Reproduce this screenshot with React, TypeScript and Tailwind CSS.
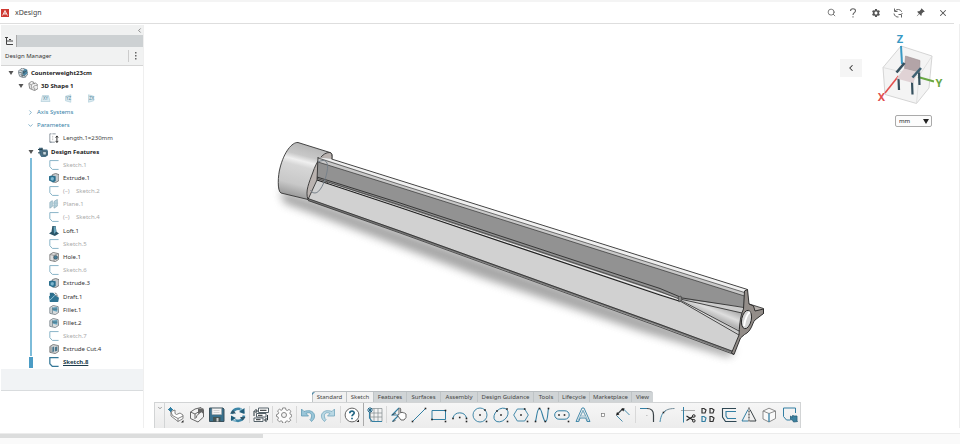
import { useState, type ReactNode } from "react";
import { BsPinAngleFill } from "react-icons/bs";
import { MdSettings } from "react-icons/md";
import { ChevronDown, ChevronLeft, ChevronRight, Search, X } from "lucide-react";

type TreeRow = {
  label: string;
  icon: string;
  muted?: boolean;
  derived?: boolean;
  active?: boolean;
};

const features: TreeRow[] = [
  { label: "Sketch.1", icon: "sketch", muted: true },
  { label: "Extrude.1", icon: "extrude" },
  { label: "Sketch.2", icon: "sketch", muted: true, derived: true },
  { label: "Plane.1", icon: "plane", muted: true },
  { label: "Sketch.4", icon: "sketch", muted: true, derived: true },
  { label: "Loft.1", icon: "loft" },
  { label: "Sketch.5", icon: "sketch", muted: true },
  { label: "Hole.1", icon: "hole" },
  { label: "Sketch.6", icon: "sketch", muted: true },
  { label: "Extrude.3", icon: "extrude" },
  { label: "Draft.1", icon: "draft" },
  { label: "Fillet.1", icon: "fillet" },
  { label: "Fillet.2", icon: "fillet" },
  { label: "Sketch.7", icon: "sketch", muted: true },
  { label: "Extrude Cut.4", icon: "cut" },
  { label: "Sketch.8", icon: "sketchActive", active: true },
];

const tabs = [
  { name: "Standard", width: "w-[34px]" },
  { name: "Sketch", width: "w-[27px]" },
  { name: "Features", width: "w-[33px]" },
  { name: "Surfaces", width: "w-[34px]" },
  { name: "Assembly", width: "w-[37px]" },
  { name: "Design Guidance", width: "w-[56px]" },
  { name: "Tools", width: "w-[25px]" },
  { name: "Lifecycle", width: "w-[31px]" },
  { name: "Marketplace", width: "w-[42px]" },
  { name: "View", width: "w-[22px]" },
];

// 12 x 12 drawings for the design tree
const treeIcons: Record<string, ReactNode> = {
  product: (
    <>
      <path d="M0 4l5-4 5 2 2 5-4 5-6-2z" fill="#d7dde1" stroke="#56646c" strokeWidth=".8" />
      <path d="M5 5l3-4 3 1v5L7 10z" fill="#4b87a5" />
      <path d="M1 5l4 1v5M6 6l5-3M3 3l4 1v3M3 8l6 2" fill="none" stroke="#3d4b53" strokeWidth=".8" />
    </>
  ),
  shape: (
    <>
      <path d="M1 3l3-2.500 3 1v2l2-1L12 5v4l-4 2.500L2 9z" fill="#f1f1f1" stroke="#6c6c6c" strokeWidth=".9" />
      <path d="M1 3l3 1.500v5M4 4.500l3-2M6 9c0-3 2-4 5-3.500M8 8v3" fill="none" stroke="#777" strokeWidth=".8" />
    </>
  ),
  parameter: (
    <>
      <path d="M3 1H1v10h2M4 1h4M1 11h6" fill="none" stroke="#6e7c86" strokeWidth=".9" />
      <path d="M4 4h1M4 6h1M4 8h1" stroke="#999" />
      <path d="M9.500 4v7M8 5.500L9.500 3.500 11 5.500M8 9.500l1.500 2 1.500-2" fill="none" stroke="#333" strokeWidth="1.200" />
    </>
  ),
  featureSet: (
    <>
      <path d="M1 1h4v2h6l1 2v5l-3 2H4L2 9z" fill="#4a7187" />
      <path d="M0 3h5M0 7h3M5 1v3" stroke="#25424f" strokeWidth="1.200" />
      <path d="M5.500 5.500h4.500v4H6z" fill="#c9d9e1" stroke="#2e4a57" strokeWidth=".8" />
    </>
  ),
  sketch: <path d="M11.500 .7H1v7.300l3 3.300h7.500" fill="none" stroke="#8ab5c8" strokeWidth="1.200" />,
  sketchActive: <path d="M11.500 .7H1v7.300l3 3.300h7.500" fill="none" stroke="#347797" strokeWidth="1.500" />,
  extrude: (
    <>
      <path d="M4 2l4-1.500 4 1.500v7l-4 2.500-4-1z" fill="#c3c8cb" stroke="#555" strokeWidth=".8" />
      <path d="M0 4l3-1 5 1v5.500l-3 2L0 9z" fill="#2a6f8e" />
      <path d="M2 5.500l3-.8 1 2-1 2.500-3-.700z" fill="#7fb7cf" />
    </>
  ),
  plane: (
    <>
      <path d="M1 4l3-2v7l-3 2zM6 3l4-2.500v8L6 11z" fill="#b8d3de" stroke="#86a8b6" strokeWidth=".8" />
      <path d="M4 5h7M4 8h5" stroke="#a1c2cf" strokeWidth=".9" />
    </>
  ),
  loft: (
    <>
      <path d="M4 0h4l1 7 3 2-5 3L0 9l3-2z" fill="#2b5567" />
      <path d="M5.500 .5H8L8.500 7 6 9.500z" fill="#68a5bd" />
    </>
  ),
  hole: (
    <>
      <path d="M1 3l4-2.500L11.500 2v7l-4 2.500L1 10z" fill="#dedede" stroke="#666" strokeWidth=".9" />
      <path d="M1 3l5 1v7M6 4l5-2" stroke="#777" strokeWidth=".8" fill="none" />
      <circle cx="8" cy="6.500" r="2.300" fill="#477d97" stroke="#33434b" strokeWidth=".6" />
    </>
  ),
  draft: (
    <>
      <path d="M1 1h4l3 3-2 2L1 7z" fill="#2c6c8a" />
      <path d="M0 5l6-2 6 4-1 5H1z" fill="#2f7493" />
      <path d="M7 1l3 2M8 4l3 1" stroke="#555" strokeWidth=".9" />
      <path d="M1 10l6-6" stroke="#a9d2e2" />
    </>
  ),
  fillet: (
    <>
      <path d="M1 3l4-2.500 6 1.500.5 7-4 2.500L1 10z" fill="#d9dcdd" stroke="#68737a" strokeWidth=".9" />
      <path d="M4 3l6-.5V8L5 7z" fill="#5f9fba" />
      <path d="M4 3v7M4 5h6" stroke="#41606f" strokeWidth=".8" />
    </>
  ),
  cut: (
    <>
      <path d="M1 3l4-2.500L11.500 2v7l-4 2.500L1 10z" fill="#cfd2d3" stroke="#666" strokeWidth=".9" />
      <path d="M4 4l2-1v6l-2 1zM7 4l3-1v5l-3 1z" fill="#4b768c" />
      <path d="M2.500 3v7" stroke="#777" strokeWidth=".8" />
    </>
  ),
};

const ink = "#3b4347";
const blue = "#337fa3";

// 16 x 16 drawings for the action bar
const newPart = (
  <>
    <path d="M3 4.500L7 3v3.500l1.500 1L12 6l3 2v3.500l-5 3L3 9z" fill="#fff" stroke="#777" strokeWidth=".9" />
    <path d="M3 5l1.500 3.500L10 11.500 15 9M10 11.500v3" stroke="#777" strokeWidth=".9" />
    <path d="M2.500 0v5M0 2.500h5M1 1l3 3M4 1L1 4" stroke={blue} />
    <path d="M15.500 13v2.500H13z" fill="#222" />
  </>
);
const openPart = (
  <>
    <path d="M1.500 5L6 2l6-1.500L14.500 3v7l-5.500 5-7.500-3.500z" fill="#f3f3f3" stroke="#666" />
    <path d="M1.500 5L6 7v5M6 7l5-3M7 11c1-4 3-4 6-7" stroke="#666" />
    <path d="M9 1.500h5.500V7L12 5 9 7z" fill="#666" />
  </>
);
const save = (
  <>
    <path d="M.5 1h13.500l1 1V14.500H.5z" fill="#39708c" stroke="#3b515c" />
    <path d="M3 1.500h9.500v6H3z" fill="#f5f5f5" stroke="#aaa" strokeWidth=".6" />
    <path d="M4 10h7.500v4.500H4z" fill="#455" />
    <path d="M7.500 11h2v3.500h-2z" fill="#ccc" />
    <path d="M4.500 3.500h6M4.500 5.500h6" stroke="#bbb" strokeWidth=".6" />
  </>
);
const update = (
  <>
    <path d="M2 7a6 6 0 0 1 9.500-4M14 8.500A6 6 0 0 1 5 13" stroke="#3d86a7" strokeWidth="2.600" />
    <path d="M1 11.500A6 6 0 0 0 6 14M10 2a6 6 0 0 1 4 4" stroke="#82b4ca" strokeWidth="2" />
    <path d="M14.500 1v6L9 5zM1 14V8.500L6 11z" fill="#1f5c79" />
    <path d="M0 6.500L3 3l3 3.500zM10 10h5.500l-3 3.500z" fill="#31566a" />
  </>
);
const reorder = (
  <>
    <path d="M5.500 1h10v4.500h-10zM3.500 6.500h9.500V10H3.500zM1 11h9v3.500H1z" fill="#fff" stroke="#56636a" />
    <path d="M7 3.300h6.500M5 8.300h4.500M3 12.700h4.500" stroke="#4a4f52" strokeWidth="1.300" />
    <path d="M1 9V4h3M2.500 2l2 2-2 2M14.500 8v5H12M13.500 11l-2 2 2 2" stroke="#26343b" />
  </>
);
const gear = (
  <>
    <path d="M6.500 1h3l.4 2 1.500.7 1.800-1.200 2 2-1.200 1.800.6 1.500 1.400.4v2l-1.600.7-.6 1.300 1.200 1.800-2 1.700-1.700-1.100-1.500.6-.5 1.800h-2.800l-.4-1.900-1.400-.6-1.700 1.100-2-2 1.100-1.800-.6-1.400-1.500-.4V8l1.700-.6.6-1.500-1.200-1.800 2-1.800 1.800 1.200L6 3z" transform="translate(.5 0) scale(.95)" fill="#fdfdfd" stroke="#858585" />
    <circle cx="8" cy="8" r="2.500" fill="#f4f4f4" stroke="#858585" />
  </>
);
const undo = (
  <path d="M1.500 2v7h7L6 6.500c3.500-2 7 0 5 5l-1 1 1.500 2c6.500-5 2-13.500-7.500-10z" fill="#9ac6d9" stroke="#5f9bb4" strokeWidth=".8" />
);
const redo = (
  <path d="M14.500 2v7h-7L10 6.500c-3.500-2-7 0-5 5l1 1-1.500 2C-2 9.500 2.500 1 12 4.500z" fill="#b9d8e4" stroke="#72a6bc" strokeWidth=".8" />
);
const help = (
  <>
    <circle cx="8" cy="8" r="6.900" fill="#fff" stroke="#555" strokeWidth=".9" />
    <path d="M5.800 6.300C5.800 3.300 10.300 3.500 10.200 6c0 1.500-2.200 1.500-2.200 3.300M8 10.700V12.300" stroke="#246785" strokeWidth="1.700" />
    <path d="M15 12.500V15h-2.500z" fill="#222" />
  </>
);
const sketchGrid = (
  <>
    <path d="M3.500 1.500h11.500v13H3.500zM7 1.500v13M11 1.500v13M3 6h12M3 10h12" stroke="#81898d" strokeWidth=".7" />
    <path d="M2.500 5v6l3 3.500H15" stroke={blue} strokeWidth="1.100" />
    <path d="M3 0v6M0 3h6M1 1l4 4M5 1L1 5" stroke="#286b8c" />
  </>
);
const smartSketch = (
  <>
    <path d="M8 1L1 8h7l-6.500 6.500" stroke={blue} strokeWidth="1.200" />
    <path d="M1 8l4-2M1.500 14.500l3-1" stroke={ink} strokeWidth=".8" />
    <path d="M8 7.500V2c0-1.200 1.700-1.200 1.700 0v4l1.300-.8 1.300.5 1.200.3 1.500 1v3.500l-2 2.500H10L6.500 8.500z" fill="#fff" stroke="#555" strokeWidth=".9" />
  </>
);
const dots = (...points: number[][]) =>
  points.map(([x, y]) => <rect key={x + "-" + y} x={x - 0.8} y={y - 0.8} width="1.6" height="1.6" fill="#222" stroke="none" />);
const line = <><path d="M1.500 14.500l13-13" stroke={blue} />{dots([1.5, 14.5], [14.5, 1.5])}</>;
const rectangle = <><path d="M1 3.500h13.500V12.500H1z" stroke={blue} />{dots([14.5, 3.5], [1, 12.5], [14.5, 14.5])}</>;
const arc = <><path d="M1 11a7 7 0 0 1 13.500 0" stroke={blue} />{dots([1, 11.5], [14.5, 11.5], [7.7, 10.5], [14.5, 14.5])}</>;
const circle = <><circle cx="8" cy="8" r="7" stroke={blue} strokeWidth=".9" />{dots([8, 8], [13, 3], [14.5, 14.5])}</>;
const ellipse = <><ellipse cx="8" cy="8" rx="8" ry="5.800" transform="rotate(-42 8 8)" stroke={blue} strokeWidth=".9" />{dots([8, 8], [14, 2], [4, 4], [14.5, 14.5])}</>;
const polygon = <><path d="M4.300 2h7.400L15.300 8l-3.600 6H4.300L.7 8z" stroke={blue} strokeWidth=".9" />{dots([8, 8], [11.7, 2], [14.5, 14.5])}</>;
const spline = <><path d="M1.500 14.500C3 9 3 1.500 5.500 1.500S9 14.500 11.500 14.500 13.500 6 14.500 1.500" stroke={blue} strokeWidth="1.100" />{dots([1.5, 14.5], [5.5, 1.5], [11.3, 14.5], [14.5, 1.5])}</>;
const slot = <><rect x=".7" y="3.800" width="14.500" height="8.400" rx="4.200" stroke={blue} />{dots([5, 8], [10.5, 8], [14.5, 14.5])}</>;
const textTool = (
  <>
    <path d="M1 14.500L7 1h2l6 13.500h-3L10.800 11H5L3.800 14.500z" stroke={blue} strokeWidth=".9" />
    <path d="M8 4L5.500 9h5zM3 14L8 3l5 11" stroke="#6a9fb7" strokeWidth=".7" />
  </>
);
const point = <rect x="6.500" y="6.500" width="3" height="3" fill="#fff" stroke="#777" strokeWidth=".7" />;
const dimension = (
  <>
    <path d="M2 7.500l6-6" stroke={ink} strokeWidth="1.100" />
    <path d="M8.500 2l6 6M1.500 8.500l6 6" stroke={blue} strokeWidth=".9" />
    <path d="M1 8.500l1-3.500 2.500 2.500zM9.500 1L6 2l2.500 2.500z" fill="#222" />
  </>
);
const corner = <><path d="M1 1.500h7" stroke={blue} /><path d="M8 1.500c4.500 0 6.500 2 6.500 6.500V15" stroke={ink} strokeWidth="1.200" /><path d="M7.500 8.500h.8" stroke="#999" /></>;
const tangentArc = <><path d="M1 15C2 8 4 5 7 3.500" stroke={blue} strokeWidth=".9" /><path d="M5 5c2-2 5-3.500 10.500-3.500" stroke="#65818f" strokeWidth=".9" />{dots([4.5, 5.5])}</>;
const trim = (
  <>
    <path d="M1 3.500h14" stroke="#999" strokeWidth=".8" />
    <path d="M3.500 0v15.500" stroke={blue} />
    <path d="M6.500 9l6.500 4M6.500 13.500L13 9.500" stroke="#222" strokeWidth="1.200" />
    <circle cx="13.800" cy="9" r="1.300" stroke="#222" /><circle cx="13.800" cy="13.800" r="1.300" stroke="#222" />
  </>
);
const pattern = (
  <>
    <path d="M10 1.500h2l2 1.500-1 3h-3zM2 1.500h2L6 3 5 6H2zM10 9.500h2l2 1.500-1 3.500h-3z" stroke="#333" strokeWidth="1.200" />
    <path d="M2 9.500h2L6 11l-1 3.500H2z" stroke={blue} strokeWidth="1.200" />
  </>
);
const offset = <><path d="M15 1.500H1.500V10l3 4.500H15.500" stroke="#2f4854" strokeWidth="1.100" /><path d="M15 4.500H5V9l1.500 2.500H15" stroke={blue} strokeWidth="1.100" /></>;
const mirror = <><path d="M7 2.500L1 14h6" stroke={blue} /><path d="M9 2.500L15 14H9" stroke={ink} /><path d="M8 .5v15" stroke="#222" strokeDasharray="2 1" /></>;
const projectBox = (
  <>
    <path d="M2 4l6-2.800L14.500 4v7.500L8 15l-6-3z" fill="#f9f9f9" stroke="#808080" strokeWidth=".9" />
    <path d="M2 4l6 2.500L14.500 4" stroke="#808080" strokeWidth=".9" />
    <path d="M8 6.500V15" stroke={blue} strokeWidth="1.300" />
  </>
);
const exitSketch = (
  <>
    <path d="M13.500 6V1H1.500v8.500l3 3.500H8.500" stroke={blue} />
    <path d="M8.500 9l2 1.500v-2l2 .5h2.500v4.500l.5 1-4 .5-1-2-2-.5z" fill="#3c819f" stroke="#245d78" strokeWidth=".8" />
  </>
);

const toolGroups: { name: string; icon: ReactNode }[][] = [
  [
    { name: "New", icon: newPart },
    { name: "Open", icon: openPart },
    { name: "Save", icon: save },
    { name: "Update", icon: update },
  ],
  [{ name: "Reorder", icon: reorder }],
  [{ name: "Options", icon: gear }],
  [
    { name: "Undo", icon: undo },
    { name: "Redo", icon: redo },
  ],
  [{ name: "Help", icon: help }],
  [{ name: "New sketch", icon: sketchGrid }],
  [
    { name: "Smart sketch", icon: smartSketch },
    { name: "Line", icon: line },
    { name: "Rectangle", icon: rectangle },
    { name: "Arc", icon: arc },
    { name: "Circle", icon: circle },
    { name: "Ellipse", icon: ellipse },
    { name: "Polygon", icon: polygon },
    { name: "Spline", icon: spline },
    { name: "Slot", icon: slot },
    { name: "Text", icon: textTool },
    { name: "Point", icon: point },
    { name: "Dimension", icon: dimension },
  ],
  [
    { name: "Corner", icon: corner },
    { name: "Tangent arc", icon: tangentArc },
    { name: "Trim", icon: trim },
    { name: "Pattern", icon: pattern },
    { name: "Offset", icon: offset },
    { name: "Mirror", icon: mirror },
    { name: "Project", icon: projectBox },
    { name: "Exit sketch", icon: exitSketch },
  ],
];

export default function App() {
  const [activeTab, setActiveTab] = useState("Sketch");
  const [unit, setUnit] = useState("mm");

  return (
    <div className="flex min-h-screen flex-col border-t-2 border-[#f4f4f4] bg-white font-['Noto_Sans',sans-serif] text-[6px] leading-none text-[#444]">
      <Header />
      <div className="flex border-r border-[#eee]">
        <DesignManager />
        <main className="min-w-0 flex-1">
          <div className="relative">
            <Model />
            <button type="button" aria-label="Collapse panel" className="absolute top-[35px] right-[97px] flex h-[18px] w-[22px] items-center justify-center bg-[#f5f5f5] text-[#333]">
              <ChevronLeft size={10} strokeWidth={2.5} />
            </button>
            <div className="absolute top-[8px] right-[15px]">
              <ViewCube />
            </div>
            <div className="absolute top-[91px] right-[27px]">
              <select aria-label="Units" value={unit} onChange={(event) => setUnit(event.target.value)} className="block h-[12px] w-[37px] appearance-none rounded-[2px] border border-[#aaa] bg-[#fcfcfc] pl-[3px] text-[6px] leading-none text-[#222]">
                <option>mm</option>
                <option>cm</option>
                <option>in</option>
              </select>
              <svg viewBox="0 0 6 5" className="pointer-events-none absolute top-[4px] right-[3px] h-[5px] w-[6px]">
                <path d="M0 0h6L3 5z" fill="#222" />
              </svg>
            </div>
          </div>

          <div className="ml-[10px] w-[647px] max-w-full">
            <div role="tablist" className="relative ml-[158px] flex h-[11px] w-[341px] overflow-hidden rounded-t-[3px] border-t border-[#b9bec1] bg-[#d0d4d6]">
              {tabs.map((tab) => (
                <button
                  key={tab.name}
                  type="button"
                  role="tab"
                  aria-selected={tab.name === activeTab}
                  onClick={() => setActiveTab(tab.name)}
                  className={`${tab.width} shrink-0 border-l border-[#bfc4c6] whitespace-nowrap ${tab.name === activeTab || tab.name === "Standard" ? "bg-[#f1f1f1]" : ""}`}
                >
                  {tab.name}
                </button>
              ))}
              <svg viewBox="0 0 3 3" className="pointer-events-none absolute top-0 left-0 size-[3px]">
                <path d="M0 0h3L0 3z" fill="#3b7ea0" />
              </svg>
            </div>
            <ActionBar />
          </div>
        </main>
      </div>
      <div className="mt-[5px] flex-1 border-t border-[#ececec] bg-[#fafafa]">
        <div className="h-[4px] w-[27.4%] bg-[#dcdddd]" />
      </div>
    </div>
  );
}

function Header() {
  return (
    <header className="mr-[6px] flex h-[22px] items-center border-b border-[#dedede] pl-px">
      <svg viewBox="0 0 8 8" className="size-2">
        <rect width="8" height="8" fill="#cf3a32" />
        <path d="M1.500 6.500L4 1.500l2.500 5M2.500 5h3M4 3v2" fill="none" stroke="#fff" strokeWidth=".8" />
      </svg>
      <h1 className="ml-[6px] flex-1 text-[7px]">xDesign</h1>
      <div className="flex w-[134px] text-[#555] *:flex *:h-[20px] *:flex-1 *:items-center *:justify-center">
        <button type="button" aria-label="Search"><Search size={9} strokeWidth={2} /></button>
        <button type="button" aria-label="Help">
          <svg viewBox="0 0 8 10" className="h-[10px] w-2" fill="none" stroke="#666" strokeWidth="1.100">
            <path d="M1.500 3C1.500 0 6.500 0 6.500 2.800 6.500 4.800 4 4.500 4 7M4 8.300v1.200" />
          </svg>
        </button>
        <button type="button" aria-label="Settings"><MdSettings size={10} /></button>
        <button type="button" aria-label="Refresh">
          <svg viewBox="0 0 10 10" className="size-[10px]" fill="none" stroke="#666">
            <path d="M1.500 .5v3h3M2 3.200A3.800 3.800 0 0 1 8.700 3.800M9 5v1M1 5.500a4 4 0 0 0 4.500 3.500" />
            <path d="M8.500 9.500v-3h-3" />
          </svg>
        </button>
        <button type="button" aria-label="Pin"><BsPinAngleFill size={9} /></button>
        <button type="button" aria-label="Close"><X size={10} strokeWidth={2.5} /></button>
      </div>
    </header>
  );
}

function DesignManager() {
  return (
    <aside className="mt-px ml-px w-[143px] shrink-0 border-r border-[#efefef]">
      <div className="flex h-[10px] items-center justify-end bg-[#f0f1f1]">
        <button type="button" aria-label="Hide panel"><ChevronLeft size={7} /></button>
      </div>
      <div className="flex h-[12px] bg-[#cdd1d3]">
        <button type="button" aria-label="Tree" className="flex w-[16px] items-center justify-center border-r border-[#aaa] bg-[#f2f3f3]">
          <svg viewBox="0 0 8 8" className="size-2" fill="none" stroke="#444">
            <path d="M0 .5h3M1.500 1v6.500H8M2 4h6M4 2.500h2" />
          </svg>
        </button>
      </div>
      <div className="flex h-[19px] items-center border-b border-[#d5d5d5] bg-[#f1f2f2] pl-1">
        <h2 className="flex-1 text-[#333]">Design Manager</h2>
        <button type="button" aria-label="More" className="flex h-[12px] w-[15px] items-center justify-center border-l border-[#ccc]">
          <svg viewBox="0 0 2 8" className="h-2 w-[2px]" fill="#666">
            <path d="M0 0h1.500v1.500H0zM0 3h1.500v1.500H0zM0 6h1.500v1.500H0z" />
          </svg>
        </button>
      </div>

      <ul className="grid h-[303px] auto-rows-fr whitespace-nowrap *:flex *:items-center *:gap-[3px]">
        <li className="pl-[6px] font-bold text-[#222]"><Caret /><TreeIcon name="product" />Counterweight23cm</li>
        <li className="pl-[16px] font-bold text-[#222]"><Caret /><TreeIcon name="shape" />3D Shape 1</li>
        <li className="pl-[40px]">
          <div className="flex gap-[14px]">
            <PlaneIcon name="XY" shape="M2 1h8l2 8H0z" />
            <PlaneIcon name="YZ" shape="M2 2l7-2v10l-7-2z" />
            <PlaneIcon name="ZX" shape="M2 0l7 2v6l-7 2z" />
          </div>
        </li>
        <li className="pl-[26px] text-[#3582a8]"><ChevronRight size={7} />Axis Systems</li>
        <li className="pl-[26px] text-[#3582a8]"><ChevronDown size={7} />Parameters</li>
        <li className="pl-[48px]"><TreeIcon name="parameter" /><span className="pl-px">Length.1=230mm</span></li>
        <li className="pl-[26px] font-bold text-[#222]"><Caret /><TreeIcon name="featureSet" />Design Features</li>
        {features.map((row) => (
          <li key={row.label} className={row.active ? "pl-[28px] font-bold text-[#1d3c4c]" : row.muted ? "pl-[29px] text-[#aaa]" : "pl-[29px] text-[#333]"}>
            <span className={row.active ? "mr-[13px] h-[11px] w-[4px] bg-[#4b9cc5]" : "mr-[14px] w-[2px] self-stretch bg-[#7dbcd9]"} />
            <TreeIcon name={row.icon} />
            {row.derived && <span className="w-[10px] pl-px">(–)</span>}
            <span className={row.active ? "pl-px underline" : "pl-px"}>{row.label}</span>
          </li>
        ))}
      </ul>
      <div className="h-[22px] border-b border-[#d9dcde] bg-[#f1f3f5]" />
    </aside>
  );
}

function Caret() {
  return (
    <svg viewBox="0 0 8 8" className="size-2">
      <path d="M1.500 2h5L4 6z" fill="#555" />
    </svg>
  );
}

function PlaneIcon({ name, shape }: { name: string; shape: string }) {
  return (
    <svg viewBox="0 0 12 10" className="h-[9px] w-[9px] overflow-visible">
      <path d={shape} fill="#dcebf1" stroke="#a9c9d6" strokeWidth=".8" />
      <text x="6" y="7" fontSize="6" textAnchor="middle" fill="#5a8ca3">{name}</text>
    </svg>
  );
}

function TreeIcon({ name }: { name: string }) {
  return <svg viewBox="0 0 12 12" className="size-[10px] shrink-0">{treeIcons[name]}</svg>;
}

function ActionBar() {
  return (
    <div role="toolbar" className="flex h-[26px] border border-b-0 border-[#d2d4d5] bg-linear-to-b from-[#f6f6f6] to-[#ececec]">
      <button type="button" aria-label="Collapse toolbar" className="flex w-[10px] justify-center border-r border-[#d2d4d5] pt-[2px]">
        <ChevronDown size={6} />
      </button>
      <div className="flex flex-1 pb-[2px] pl-px">
        {toolGroups.map((group, index) => (
          <div key={group[0].name} className="contents">
            {index > 0 && (
              <span className={index === 5 ? "mx-px w-px bg-[#aaa]" : "mx-px my-[3px] w-px bg-[#d8d8d8]"} />
            )}
            {group.map((tool) => (
              <button key={tool.name} type="button" aria-label={tool.name} className="flex flex-1 items-center justify-center">
                <svg viewBox="0 0 16 16" className="size-[16px] shrink-0" fill="none">{tool.icon}</svg>
              </button>
            ))}
          </div>
        ))}
      </div>
    </div>
  );
}

function Model() {
  return (
    <svg viewBox="144 24 815 367" className="block h-auto w-full" role="img" aria-label="Counterweight model">
      <defs>
        <linearGradient id="cap" x1="300" y1="142" x2="286" y2="196" gradientUnits="userSpaceOnUse">
          <stop offset="0" stopColor="#b5b5b5" />
          <stop offset=".22" stopColor="#c8c8c8" />
          <stop offset=".32" stopColor="#f0f0f0" />
          <stop offset=".42" stopColor="#d6d6d6" />
          <stop offset=".75" stopColor="#c8c8c8" />
          <stop offset="1" stopColor="#949494" />
        </linearGradient>
        <linearGradient id="cone" x1="722" y1="305" x2="714" y2="324" gradientUnits="userSpaceOnUse">
          <stop offset="0" stopColor="#a9a9a9" />
          <stop offset=".4" stopColor="#dedede" />
          <stop offset="1" stopColor="#8e8e8e" />
        </linearGradient>
        <filter id="soft" x="-10%" y="-20%" width="120%" height="140%">
          <feGaussianBlur stdDeviation="4" />
        </filter>
      </defs>

      <path d="M280 190L310 199L735 350L729 357L640 331L480 277L330 220L284 203Z" fill="#777" opacity=".65" filter="url(#soft)" />

      {/* cap */}
      <path d="M298 142.500L330 152.500C334 154 332 160 326 172L308 199.500L281 193C277 191 278 175 280 168C284 152 292 142 298 142.500Z" fill="url(#cap)" stroke="#333" strokeWidth=".9" />
      <path d="M330 152.500C322 152 316 163 313 172C309 183 305 191 308 199.500L328 182L332 159C332 155 332 153 330 152.500Z" fill="#bab3b0" stroke="#333" strokeWidth=".9" />

      {/* far fin and its rounded top */}
      <path d="M318 157L331 159L747.500 289.500L744.500 308L679 299L317 179Z" fill="#929292" />
      <path d="M317 157.500L331.500 159L747.500 289.500L744.500 296L400 187.500L318 162Z" fill="#c9c9c9" />
      <path d="M319 157.500L331.500 159L747.500 289.500L744.500 292.500L400 184.500Z" fill="#f0f0f0" />

      {/* near fin */}
      <path d="M317 179.500L679.500 300L739 334.500L732 353L308 199.500Z" fill="#d1d1d1" />
      <path d="M308 199.500L400 231.500L660 325L732 352" fill="none" stroke="#777" strokeWidth="2" />
      <g fill="none" stroke="#1f1f1f" strokeWidth=".8">
        <path d="M331.500 159L747.500 289.500" />
        <path d="M318 158L400 184.500L744.500 292.500" strokeWidth=".6" />
        <path d="M318 162L400 187.500L744.500 296" strokeWidth=".6" />
        <path d="M317 177L400 203L660 288.500L679 296.500" />
        <path d="M317 178.500L400 205L660 291.500L679 299" strokeWidth=".6" />
        <path d="M317 180L400 207.500L660 295L679 301" strokeWidth="1.200" />
        <path d="M308 198.500L400 231L660 324.500L732 351" strokeWidth=".7" />
        <path d="M308 200.500L400 233L660 327L734 354.500" strokeWidth=".7" />
        <path d="M318 157L317 180L308 199.500" />
      </g>
      <path d="M318 162c8-4 11 0 9 10s-7 21-12 21c-3 0-4-2-4.500-3" fill="none" stroke="#77818a" strokeWidth="1" />

      {/* cone that runs out of the near fin */}
      <path d="M679 299L744 307L740 335Z" fill="#cccccc" />
      <path d="M680 299L742 313L739 330Z" fill="url(#cone)" />
      <path d="M679 297.500L744 307.500M680 299L742 313M680 300L739 331M680 301L739 335" fill="none" stroke="#222" strokeWidth=".8" />
      <path d="M678 297l3-1 1 4-3 2z" fill="#888" stroke="#333" strokeWidth=".6" />

      {/* end face */}
      <path d="M749 304L754 305.500L763.500 308.500V313.500L754 317Z" fill="#b6b1ad" stroke="#222" strokeWidth=".8" />
      <path d="M744.500 291L747.500 289.500L749 304L753.500 306L755 311L763.500 309V313.500L755 320C752 323 752 331 744.500 334.500L740.500 338L734 354.500L731.500 353L739 335C739.500 328 739.500 318 743.500 309Z" fill="#938d89" stroke="#222" strokeWidth=".9" />
      <ellipse cx="746.500" cy="319.500" rx="4.800" ry="9.300" transform="rotate(12 746.500 319.500)" fill="#d5d5d5" stroke="#222" strokeWidth=".9" />
      <path d="M744 326C745 320 747 314 750 312" fill="none" stroke="#fff" strokeWidth="2" />
    </svg>
  );
}

function ViewCube() {
  return (
    <svg viewBox="876 32 68 74" className="block h-[74px] w-[68px]" role="img" aria-label="View orientation">
      <path d="M901 46L932 56L929 88L916.500 103.500L885 94.500L883 67.500Z" fill="#f4f4f4" stroke="#ccc" strokeWidth=".8" />
      <path d="M883 67.500L919 76L932 56M919 76L916.500 103.500" fill="none" stroke="#dadada" strokeWidth=".8" />
      <path d="M901 46L902 64" stroke="#3999c4" strokeWidth="2" />
      <path d="M918 77L934 81.500" stroke="#69a844" strokeWidth="2" />
      <path d="M898.500 76L885 93" stroke="#e2504f" strokeWidth="1.600" />
      <path d="M898.500 78L899 90M912 81L912.500 94.500M919 71L919.500 85" stroke="#36505e" strokeWidth="2.200" />
      <path d="M905.500 56L920 60.500L919.500 72.500L904.500 69Z" fill="#b3a4a7" stroke="#9c8e91" strokeWidth=".6" />
      <path d="M904 68.500L918 72L913 83L896.500 78.500Z" fill="#e0d2d5" />
      <path d="M896.500 72.500L904.500 63" stroke="#36505e" strokeWidth="2.600" />
      <path d="M912.500 77.500L921 68" stroke="#3f6173" strokeWidth="2.600" />
      <g fontSize="11" fontWeight="700" textAnchor="middle">
        <text x="900" y="43" fill="#3999c4">Z</text>
        <text x="939" y="87" fill="#69a844">Y</text>
        <text x="881.500" y="101" fill="#e2504f">X</text>
      </g>
    </svg>
  );
}
